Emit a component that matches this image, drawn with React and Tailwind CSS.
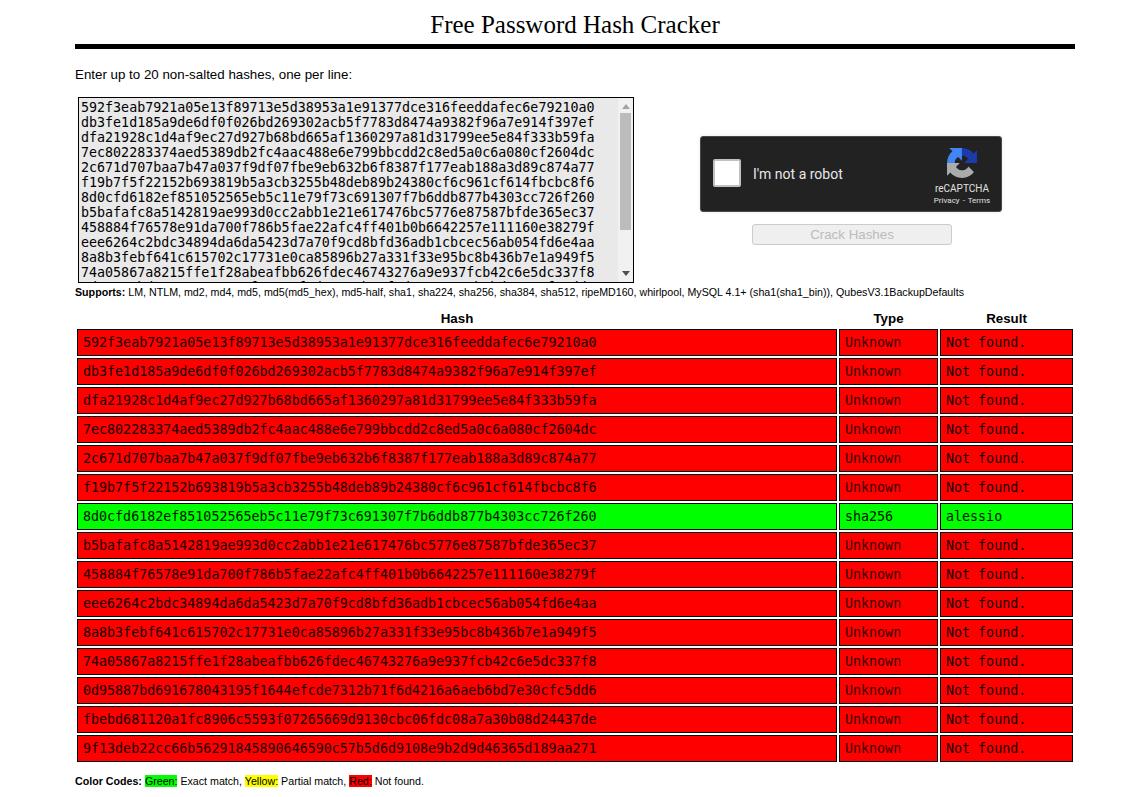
import React from 'react';

const hashes = [
    '592f3eab7921a05e13f89713e5d38953a1e91377dce316feeddafec6e79210a0',
    'db3fe1d185a9de6df0f026bd269302acb5f7783d8474a9382f96a7e914f397ef',
    'dfa21928c1d4af9ec27d927b68bd665af1360297a81d31799ee5e84f333b59fa',
    '7ec802283374aed5389db2fc4aac488e6e799bbcdd2c8ed5a0c6a080cf2604dc',
    '2c671d707baa7b47a037f9df07fbe9eb632b6f8387f177eab188a3d89c874a77',
    'f19b7f5f22152b693819b5a3cb3255b48deb89b24380cf6c961cf614fbcbc8f6',
    '8d0cfd6182ef851052565eb5c11e79f73c691307f7b6ddb877b4303cc726f260',
    'b5bafafc8a5142819ae993d0cc2abb1e21e617476bc5776e87587bfde365ec37',
    '458884f76578e91da700f786b5fae22afc4ff401b0b6642257e111160e38279f',
    'eee6264c2bdc34894da6da5423d7a70f9cd8bfd36adb1cbcec56ab054fd6e4aa',
    '8a8b3febf641c615702c17731e0ca85896b27a331f33e95bc8b436b7e1a949f5',
    '74a05867a8215ffe1f28abeafbb626fdec46743276a9e937fcb42c6e5dc337f8',
    '0d95887bd691678043195f1644efcde7312b71f6d4216a6aeb6bd7e30cfc5dd6',
    'fbebd681120a1fc8906c5593f07265669d9130cbc06fdc08a7a30b08d24437de',
    '9f13deb22cc66b56291845890646590c57b5d6d9108e9b2d9d46365d189aa271',
];

const RecaptchaLogo = () => (
    <svg width="30" height="30" viewBox="0 0 64 64">
        <path d="M64 31.955l-.033-1.37V4.687l-7.16 7.16C50.948 4.674 42.033.093 32.05.093c-10.4 0-19.622 4.96-25.458 12.64l11.736 11.86a15.55 15.55 0 0 1 4.754-5.334c2.05-1.6 4.952-2.906 8.968-2.906.485 0 .86.057 1.135.163 4.976.393 9.288 3.14 11.828 7.124l-8.307 8.307c10.522-.04 22.4-.066 27.295.003" fill="#1c3aa9" />
        <path d="M31.862.001l-1.37.033H4.594l7.16 7.16C4.58 13.053 0 21.968 0 31.95c0 10.4 4.96 19.622 12.64 25.458l11.86-11.736a15.55 15.55 0 0 1-5.334-4.754c-1.6-2.05-2.906-4.952-2.906-8.968 0-.485.057-.86.163-1.135.393-4.976 3.14-9.288 7.124-11.828l8.307 8.307c-.04-10.522-.066-22.4.003-27.295" fill="#4285f4" />
        <path d="M.001 32l.033 1.37v25.898l7.16-7.16C13.053 59.28 21.968 63.86 31.95 63.86c10.4 0 19.622-4.96 25.458-12.64l-11.736-11.86a15.55 15.55 0 0 1-4.754 5.334c-2.05 1.6-4.952 2.906-8.968 2.906-.485 0-.86-.057-1.135-.163-4.976-.393-9.288-3.14-11.828-7.124l8.307-8.307C17.772 32.046 5.895 32.07.999 32" fill="#ababab" />
    </svg>
);

const Captcha = () => (
    <div className="w-[302px] h-[76px] bg-[#222222] border border-[#4a4a4a] rounded-[3px] flex items-center pl-3 pr-[10px] shadow-[0_0_4px_rgba(0,0,0,0.08)]">
        <div className="mb-[2px] w-[28px] h-[28px] bg-white border-2 border-[#c1c1c1] rounded-[2px]" />
        <span className="ml-3 text-[14px] text-[#e8e8e8] font-['Roboto',sans-serif]">I'm not a robot</span>
        <div className="ml-auto w-[58px] pt-[5px] flex flex-col items-center text-[#e0e0e0] font-['Roboto',sans-serif]">
            <RecaptchaLogo />
            <span className="text-[10px] leading-[12px] mt-[5px]">reCAPTCHA</span>
            <span className="text-[8px] leading-[10px] mt-[1px] whitespace-nowrap [word-spacing:1px]">Privacy - Terms</span>
        </div>
    </div>
);

// the browser draws no scrollbar of its own in the headless run
const FakeScrollbar = () => (
    <div className="absolute top-[1px] right-[1px] bottom-[1px] w-[15px] bg-[#f1f1f1] flex flex-col items-center">
        <div className="mt-[6px] w-0 h-0 border-x-[4px] border-x-transparent border-b-[5px] border-b-[#a3a3a3]" />
        <div className="mt-[4px] w-[11px] h-[117px] bg-[#bcbcbc]" />
        <div className="mt-auto mb-[6px] w-0 h-0 border-x-[4px] border-x-transparent border-t-[5px] border-t-[#505050]" />
    </div>
);

const Row = ({ hash }) => {
    const found = hash.startsWith('8d0c');
    const bg = found ? 'bg-[#00ff00]' : 'bg-[#ff0000]';
    const cell = `h-[27px] border border-black px-[5px] py-0 ${bg}`;
    return (
        <tr className="font-['DejaVu_Sans_Mono',monospace] text-[13.333px]">
            <td className={`${cell} ${found ? 'text-[#001000]' : 'text-[#140000]'}`}>{hash}</td>
            <td className={`${cell} ${found ? 'text-[#001000]' : 'text-[#3a0000]'}`}>{found ? 'sha256' : 'Unknown'}</td>
            <td className={`${cell} ${found ? 'text-[#001000]' : 'text-[#120000]'}`}>{found ? 'alessio' : 'Not found.'}</td>
        </tr>
    );
};

export default function App() {
    return (
        <div className="ml-[75px] w-[1000px] font-['Liberation_Sans',Arial,sans-serif] text-black bg-white">
            <h1 className="pt-[11px] text-center text-[25px] leading-[28px] font-normal font-['Liberation_Serif',serif] border-b-[5px] border-black pb-[5px]">
                Free Password Hash Cracker
            </h1>
            <p className="mt-[18px] text-[13.333px] leading-[15px]">Enter up to 20 non-salted hashes, one per line:</p>
            <div className="mt-[15px] flex">
                <div className="relative ml-[3px] w-[556px] h-[186px]">
                    <textarea
                        readOnly
                        className="block w-full h-full border border-black bg-[#e9e9e9] p-[2px] text-[13.333px] leading-[15px] text-black font-['DejaVu_Sans_Mono',monospace] overflow-hidden resize-none outline-none"
                        value={hashes.join('\n') + '\n'}
                    />
                    <FakeScrollbar />
                </div>
                <div className="flex-1 flex flex-col items-center pt-[39px] pr-[7px]">
                    <Captcha />
                    <button disabled className="mt-[12px] ml-[2px] w-[200px] h-[21px] bg-[#efefef] border border-[#cccccc] rounded-[3px] text-[13.333px] text-[#bbbbbb]">Crack Hashes</button>
                </div>
            </div>
            <p className="mt-[2px] text-[10.667px] leading-[14px]"><b>Supports:</b> LM, NTLM, md2, md4, md5, md5(md5_hex), md5-half, sha1, sha224, sha256, sha384, sha512, ripeMD160, whirlpool, MySQL 4.1+ (sha1(sha1_bin)), QubesV3.1BackupDefaults</p>
            <table className="mt-[10px] w-[1000px] border-separate border-spacing-[2px] table-fixed">
                <thead>
                    <tr className="text-[13.333px] leading-[16px]">
                        <th className="w-[760px] font-bold p-0">Hash</th>
                        <th className="w-[99px] font-bold p-0">Type</th>
                        <th className="w-[133px] font-bold p-0">Result</th>
                    </tr>
                </thead>
                <tbody>
                    {hashes.map(h => <Row key={h} hash={h} />)}
                </tbody>
            </table>
            <p className="mt-[10px] text-[10.667px] leading-[14px]">
                <b>Color Codes:</b> <span className="bg-[#00ff00]">Green:</span> Exact match, <span className="bg-[#ffff00]">Yellow:</span> Partial match, <span className="bg-[#ff0000]">Red:</span> Not found.
            </p>
        </div>
    );
}
